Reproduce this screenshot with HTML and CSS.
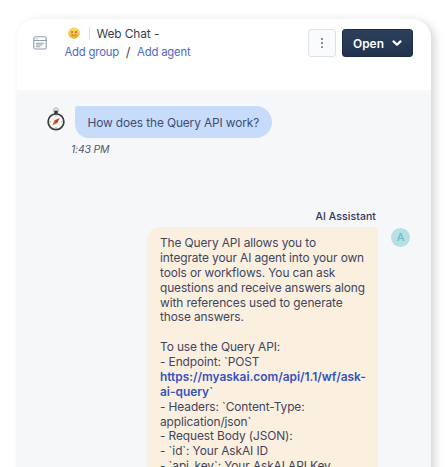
FILE: index.html
```html
<!DOCTYPE html>
<html lang="en">
<head>
<meta charset="utf-8">
<title>Web Chat</title>
<link rel="stylesheet" href="styles.css">
</head>
<body>
<main class="card">
  <header class="header">
    <svg class="inbox-icon" viewBox="0 0 14 14" fill="none" stroke="#929daf" stroke-width="1.1" stroke-linecap="round">
      <rect x=".8" y=".8" width="12.4" height="12.2" rx="1.8"/>
      <path d="M1 4.5h12M3 2.7h.1M4.8 2.7h.1M3.4 7.2h7.4M3.4 9h5.8M3.4 10.8h3.6"/>
    </svg>
    <div class="heading">
      <div class="title-row">
        <svg class="face" viewBox="0 0 12 12">
          <defs><linearGradient id="skin" x1="0" y1="0" x2="0" y2="1"><stop stop-color="#ffe16b"/><stop offset="1" stop-color="#efa82e"/></linearGradient></defs>
          <circle cx="6" cy="6" r="5.8" fill="url(#skin)"/>
          <ellipse cx="4" cy="5" rx=".7" ry="1" fill="#79501c"/><ellipse cx="8" cy="5" rx=".7" ry="1" fill="#79501c"/>
          <path d="M3.5 8q2.5 .9 5 0" fill="none" stroke="#a8732a" stroke-width=".8" stroke-linecap="round"/>
        </svg>
        <span class="divider"></span>
        <span class="title">Web Chat -</span>
      </div>
      <div class="links"><a class="add-group">Add group</a><span class="slash">/</span><a class="add-agent">Add agent</a></div>
    </div>
    <button class="more" aria-label="More"><svg viewBox="0 0 4 12" width="4" height="12" fill="#4a5168"><circle cx="2" cy="1.9" r=".9"/><circle cx="2" cy="6" r=".9"/><circle cx="2" cy="10.1" r=".9"/></svg></button>
    <button class="open"><span class="open-label">Open</span><svg viewBox="0 0 10 8" width="10" height="8" fill="none" stroke="#fff" stroke-width="2.2" stroke-linecap="round" stroke-linejoin="round"><path d="M1.5 2.4L5 5.7l3.5-3.3"/></svg></button>
  </header>
  <section class="chat">
    <div class="question-row">
      <svg class="compass" viewBox="0 0 20 25">
        <circle cx="10" cy="3.4" r="2.5" fill="none" stroke="#aaa9a6" stroke-width="1"/>
        <rect x="8.4" y="3.4" width="3.2" height="3.5" rx=".7" fill="#343434"/>
        <circle cx="10" cy="14.7" r="7.9" fill="#f8f8f5" stroke="#3d3e3d" stroke-width="1.7"/>
        <path d="M10 8.2v1.3M10 19.9v1.3M3.5 14.7h1.3M15.2 14.7h1.3" stroke="#777" stroke-width=".7"/>
        <path d="M13.6 11.1L11.4 16.1 8.6 13.3z" fill="#c93a22"/>
        <path d="M6.4 18.3L8.6 13.3 11.4 16.1z" fill="#d9593b"/>
        <circle cx="10" cy="14.7" r=".7" fill="#51332c"/>
      </svg>
      <div class="question"><span class="question-text">How does the Query API work?</span></div>
    </div>
    <div class="time"><span class="time-text">1:43 PM</span></div>
    <div class="author">AI Assistant</div>
    <div class="answer-row">
      <div class="answer">The Query API allows you to<br>integrate your AI agent into your own<br>tools or workflows. You can ask<br>questions and receive answers along<br>with references used to generate<br>those answers.<br><br>To use the Query API:<br>- Endpoint: `POST<br><a class="url">https://myaskai.com/api/1.1/wf/ask-<br>ai-query`</a><br>- Headers: `Content-Type:<br>application/json`<br>- Request Body (JSON):<br>- `id`: Your AskAI ID<br>- `api_key`: Your AskAI API Key</div>
      <div class="avatar">A</div>
    </div>
  </section>
</main>
</body>
</html>
```
FILE: styles.css
```css
* { box-sizing: border-box; }
html, body { height: 100%; }
body {
  margin: 0;
  padding: 19px 14px 0 17px;
  overflow: hidden;
  background: #fff;
  font-family: Inter, "Liberation Sans", sans-serif;
  font-size: 11.9px;
  letter-spacing: -.1px;
  color: #42465c;
}
.card {
  height: 470px;
  overflow: hidden;
  border-radius: 19px 19px 0 0;
  background: #f5f7f9;
  box-shadow: 4px 2px 8px rgba(0, 0, 0, .16);
}
.header {
  display: flex;
  align-items: flex-start;
  height: 71px;
  padding: 0 18px 0 16px;
  background: #fff;
}
.inbox-icon { width: 14px; height: 14px; margin-top: 17px; }
.heading { flex: 1; padding: 5px 0 0 17.5px; white-space: nowrap; }
.title-row { display: flex; align-items: center; height: 18px; }
.face { width: 12px; height: 12px; margin-left: 3px; }
.divider { width: 1px; height: 12px; margin: 0 7px 0 9px; background: #dcdfe7; }
.title { color: #383d50; }
.links { display: flex; height: 20px; line-height: 20px; font-size: 11.3px; letter-spacing: -.18px; color: #5169cc; }
.slash { width: 18px; text-align: center; font-size: 13px; color: #454c60; }
.more, .open {
  display: flex;
  align-items: center;
  justify-content: center;
  height: 28px;
  margin-top: 10px;
  padding: 0;
  font-family: inherit;
}
.more { width: 28px; border: 1px solid #dfe1e9; border-radius: 3px; background: #fafbfd; }
.open {
  width: 71px;
  margin-left: 6px;
  gap: 8px;
  border: 1px solid #1c2c46;
  border-radius: 3px;
  background: linear-gradient(#2c405c, #20324e);
  color: #fff;
  font-size: 11.9px;
  font-weight: 600;
}
.chat { padding: 16px 17px 0 29px; }
.question-row { display: flex; height: 32px; }
.compass { width: 20px; height: 25px; margin-top: 1px; }
.question {
  width: 197px;
  margin-left: 9px;
  padding-left: 12.5px;
  border-radius: 3px 16px 16px 14px;
  background: #c7dcfb;
  line-height: 33px;
  letter-spacing: -.12px;
  white-space: nowrap;
  color: #434d70;
}
.time { padding: 4px 0 0 25px; height: 71px; line-height: 15px; font-size: 10.5px; letter-spacing: -.2px; font-style: italic; color: #555b6e; }
.author { height: 18px; padding-right: 38px; text-align: right; line-height: 15px; font-size: 10.5px; letter-spacing: .08px; font-weight: 500; color: #30345c; }
.answer-row { display: flex; justify-content: flex-end; gap: 13px; padding-right: 4px; }
.answer {
  width: 231px;
  height: 260px;
  padding: 9px 0 0 13px;
  border-radius: 13px 2px 0 0;
  background: #fbefe0;
  line-height: 14.87px;
  white-space: nowrap;
}
.url { font-weight: 600; letter-spacing: 0; color: #3453be; }
.avatar {
  width: 19px;
  height: 19px;
  margin-top: 1px;
  border-radius: 50%;
  background: #b6dfe6;
  color: #75b8c2;
  text-align: center;
  line-height: 19px;
  font-size: 11px;
  font-weight: 500;
}
```
